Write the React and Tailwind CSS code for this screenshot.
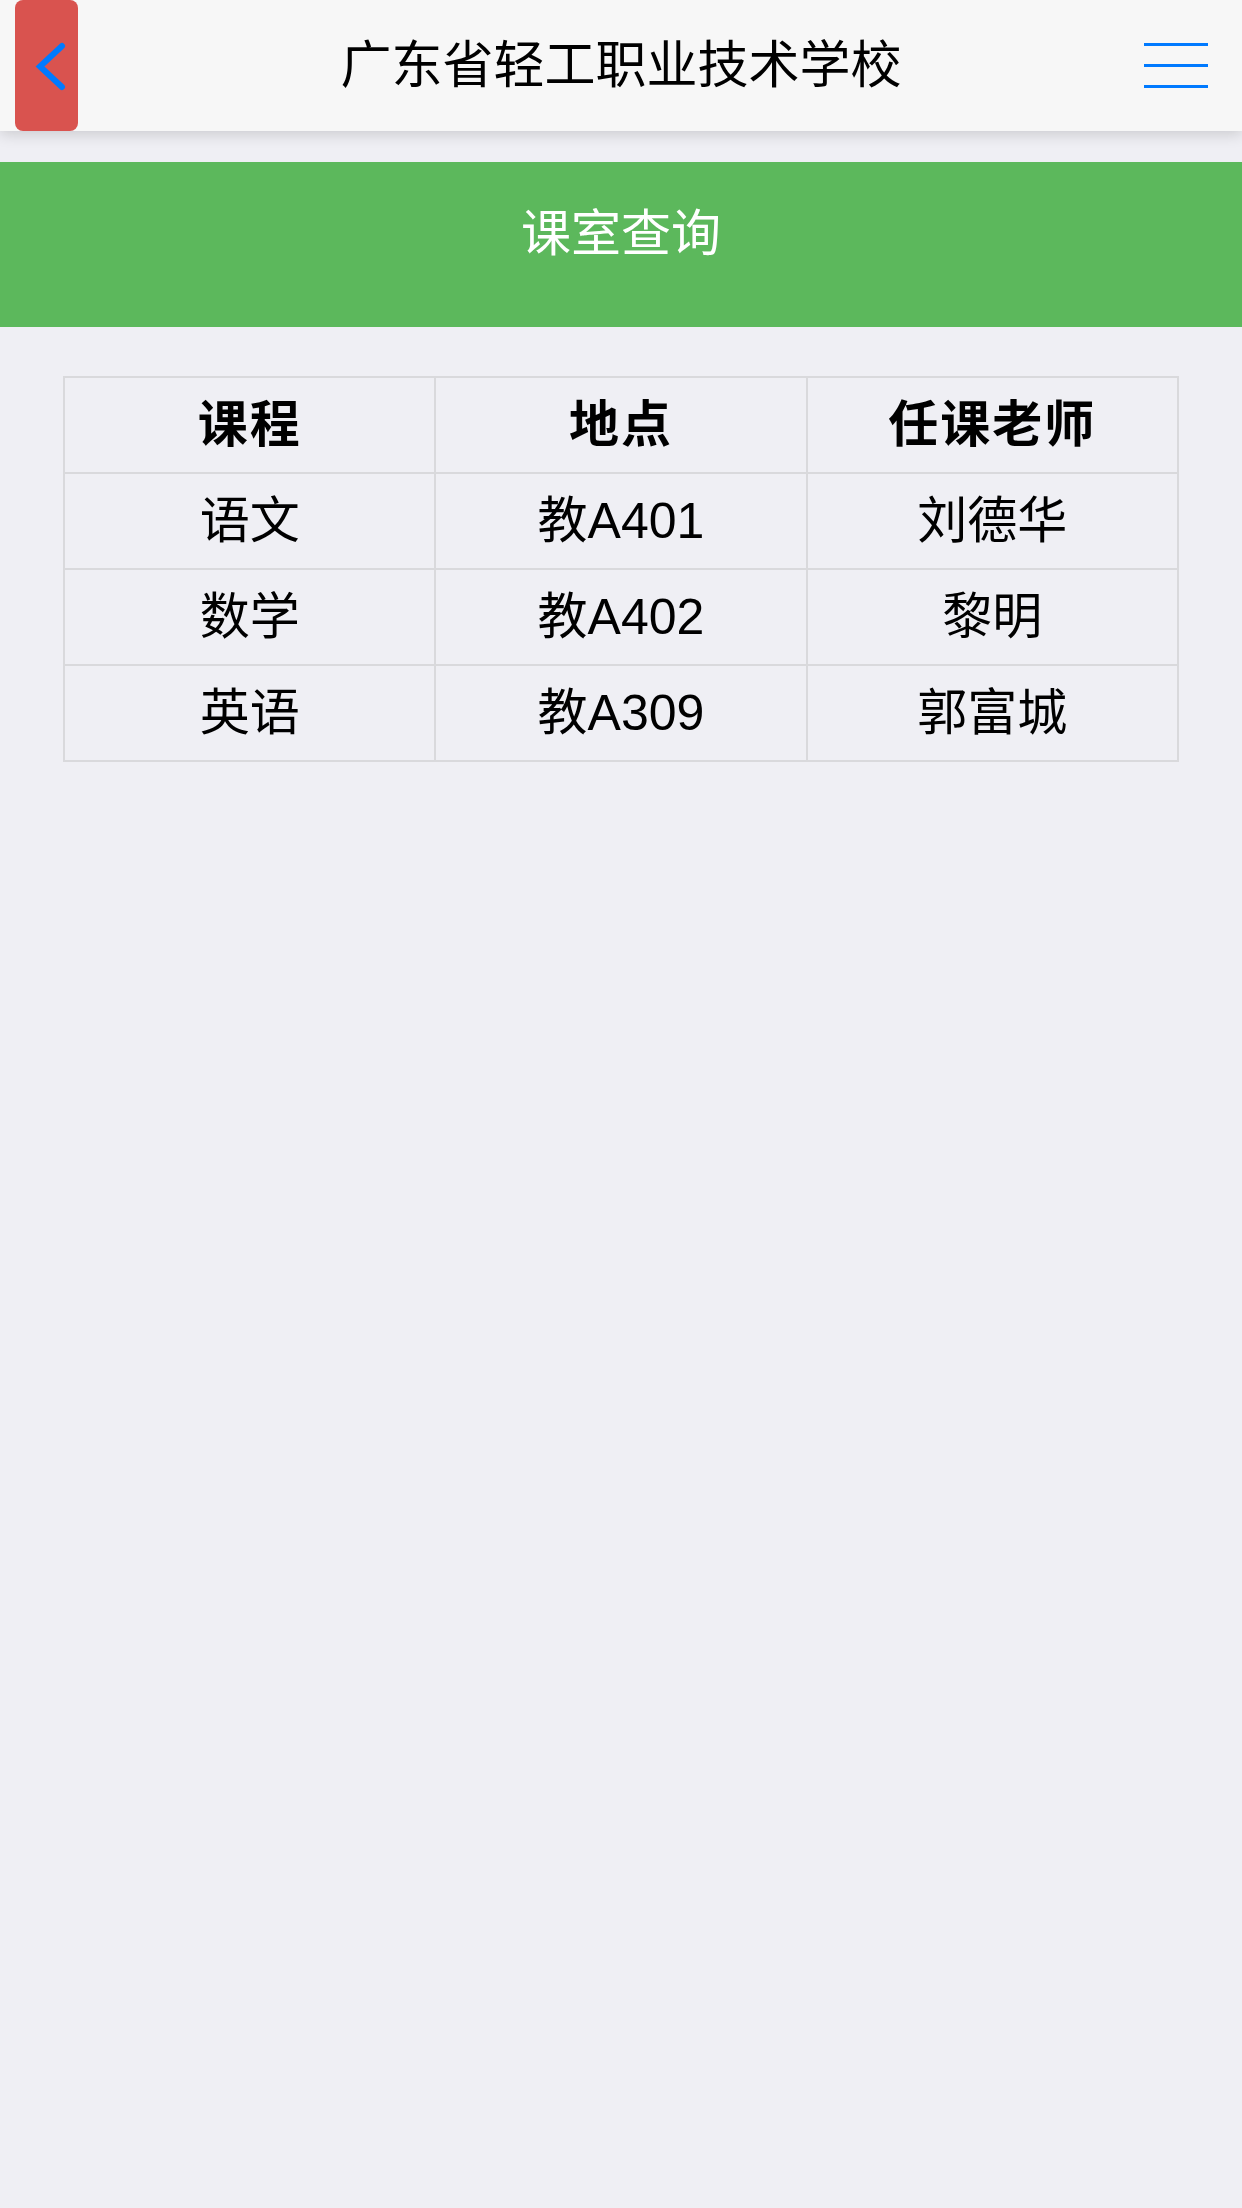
export default function App() {
  const rows = [
    ["语文", "教A401", "刘德华"],
    ["数学", "教A402", "黎明"],
    ["英语", "教A309", "郭富城"],
  ];
  const font = { fontFamily: '"Liberation Sans", "Noto Sans CJK SC", sans-serif' };
  return (
    <div className="min-h-[2208px] w-full bg-[#efeff4]" style={font}>
      <header className="relative z-10 grid h-[131px] grid-cols-[1fr_auto_1fr] items-center bg-[#f7f7f7] shadow-[0_3px_14px_rgba(0,0,0,0.16)]">
        <div className="flex h-full items-center justify-start">
          <div className="ml-[15px] flex h-full w-[63px] items-center justify-center rounded-lg bg-[#d9534f]">
            <svg width="63" height="131" viewBox="0 0 63 131">
              <path d="M47 46 L25 66.5 L47 87" fill="none" stroke="#007aff" strokeWidth="6" strokeLinecap="round" strokeLinejoin="miter" />
            </svg>
          </div>
        </div>
        <h1 className="text-[51px] font-normal leading-none text-black">广东省轻工职业技术学校</h1>
        <div className="flex h-full items-center justify-end">
          <div className="mr-[34px] flex w-[64px] flex-col gap-[18px]">
            <span className="block h-[3px] w-full bg-[#007aff]" />
            <span className="block h-[3px] w-full bg-[#007aff]" />
            <span className="block h-[3px] w-full bg-[#007aff]" />
          </div>
        </div>
      </header>

      <div className="mt-[31px] h-[165px] bg-[#5cb85c] pt-[47px] text-center text-[50px] leading-none text-white">
        课室查询
      </div>

      <div className="mx-[63px] mt-[49px]">
        <table className="w-full table-fixed border-collapse border-2 border-[#d9d9dc] text-black">
          <thead>
            <tr className="h-[96px]">
              {["课程", "地点", "任课老师"].map((h) => (
                <th key={h} className="border-2 border-[#d9d9dc] text-center text-[50px] font-bold leading-none tracking-[2px]">
                  {h}
                </th>
              ))}
            </tr>
          </thead>
          <tbody>
            {rows.map((r) => (
              <tr key={r[0]} className="h-[96px]">
                {r.map((c, i) => (
                  <td key={i} className="border-2 border-[#d9d9dc] text-center text-[50px] leading-none">
                    {c}
                  </td>
                ))}
              </tr>
            ))}
          </tbody>
        </table>
      </div>
    </div>
  );
}
